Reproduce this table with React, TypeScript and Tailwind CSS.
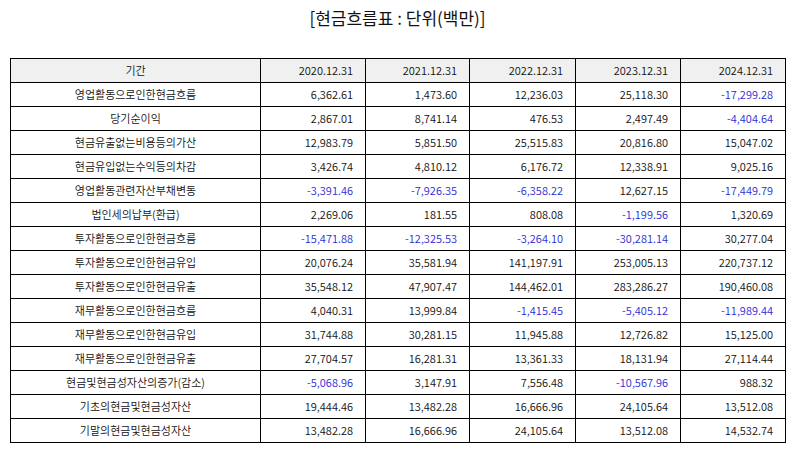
import React from "react";

const cols = ["2020.12.31", "2021.12.31", "2022.12.31", "2023.12.31", "2024.12.31"];

const rows: [string, string[]][] = [
  ["영업활동으로인한현금흐름", ["6,362.61", "1,473.60", "12,236.03", "25,118.30", "-17,299.28"]],
  ["당기순이익", ["2,867.01", "8,741.14", "476.53", "2,497.49", "-4,404.64"]],
  ["현금유출없는비용등의가산", ["12,983.79", "5,851.50", "25,515.83", "20,816.80", "15,047.02"]],
  ["현금유입없는수익등의차감", ["3,426.74", "4,810.12", "6,176.72", "12,338.91", "9,025.16"]],
  ["영업활동관련자산부채변동", ["-3,391.46", "-7,926.35", "-6,358.22", "12,627.15", "-17,449.79"]],
  ["법인세의납부(환급)", ["2,269.06", "181.55", "808.08", "-1,199.56", "1,320.69"]],
  ["투자활동으로인한현금흐름", ["-15,471.88", "-12,325.53", "-3,264.10", "-30,281.14", "30,277.04"]],
  ["투자활동으로인한현금유입", ["20,076.24", "35,581.94", "141,197.91", "253,005.13", "220,737.12"]],
  ["투자활동으로인한현금유출", ["35,548.12", "47,907.47", "144,462.01", "283,286.27", "190,460.08"]],
  ["재무활동으로인한현금흐름", ["4,040.31", "13,999.84", "-1,415.45", "-5,405.12", "-11,989.44"]],
  ["재무활동으로인한현금유입", ["31,744.88", "30,281.15", "11,945.88", "12,726.82", "15,125.00"]],
  ["재무활동으로인한현금유출", ["27,704.57", "16,281.31", "13,361.33", "18,131.94", "27,114.44"]],
  ["현금및현금성자산의증가(감소)", ["-5,068.96", "3,147.91", "7,556.48", "-10,567.96", "988.32"]],
  ["기초의현금및현금성자산", ["19,444.46", "13,482.28", "16,666.96", "24,105.64", "13,512.08"]],
  ["기말의현금및현금성자산", ["13,482.28", "16,666.96", "24,105.64", "13,512.08", "14,532.74"]],
];

const colW = ["w-[105px]", "w-[104px]", "w-[106px]", "w-[105px]", "w-[105px]"];

export default function App() {
  return (
    <div className="w-[795px] h-[452px] bg-white text-[#111] font-[350] font-['Noto_Sans_CJK_KR',sans-serif]">
      <div className="h-[36px] flex items-center justify-center text-[17px] font-normal">
        [현금흐름표 : 단위(백만)]
      </div>
      <div className="pt-[22px] px-[10px]">
        <table className="w-[775px] border-collapse table-fixed text-[11px] leading-none">
          <colgroup>
            <col className="w-[250px]" />
            {colW.map((w, i) => (
              <col key={i} className={w} />
            ))}
          </colgroup>
          <thead>
            <tr className="h-[24px] bg-[#f0f0f0]">
              <th className="border border-black font-[350] text-center">기간</th>
              {cols.map((c) => (
                <th key={c} className="border border-black font-[350] text-right pr-[12px]">
                  {c}
                </th>
              ))}
            </tr>
          </thead>
          <tbody>
            {rows.map(([label, vals]) => (
              <tr key={label} className="h-[24px]">
                <td className="border border-black text-center">{label}</td>
                {vals.map((v, i) => (
                  <td
                    key={i}
                    className={
                      v.startsWith("-")
                        ? "border border-black text-right pr-[12px] text-[#2b2bd6]"
                        : "border border-black text-right pr-[12px]"
                    }
                  >
                    {v}
                  </td>
                ))}
              </tr>
            ))}
          </tbody>
        </table>
      </div>
    </div>
  );
}
